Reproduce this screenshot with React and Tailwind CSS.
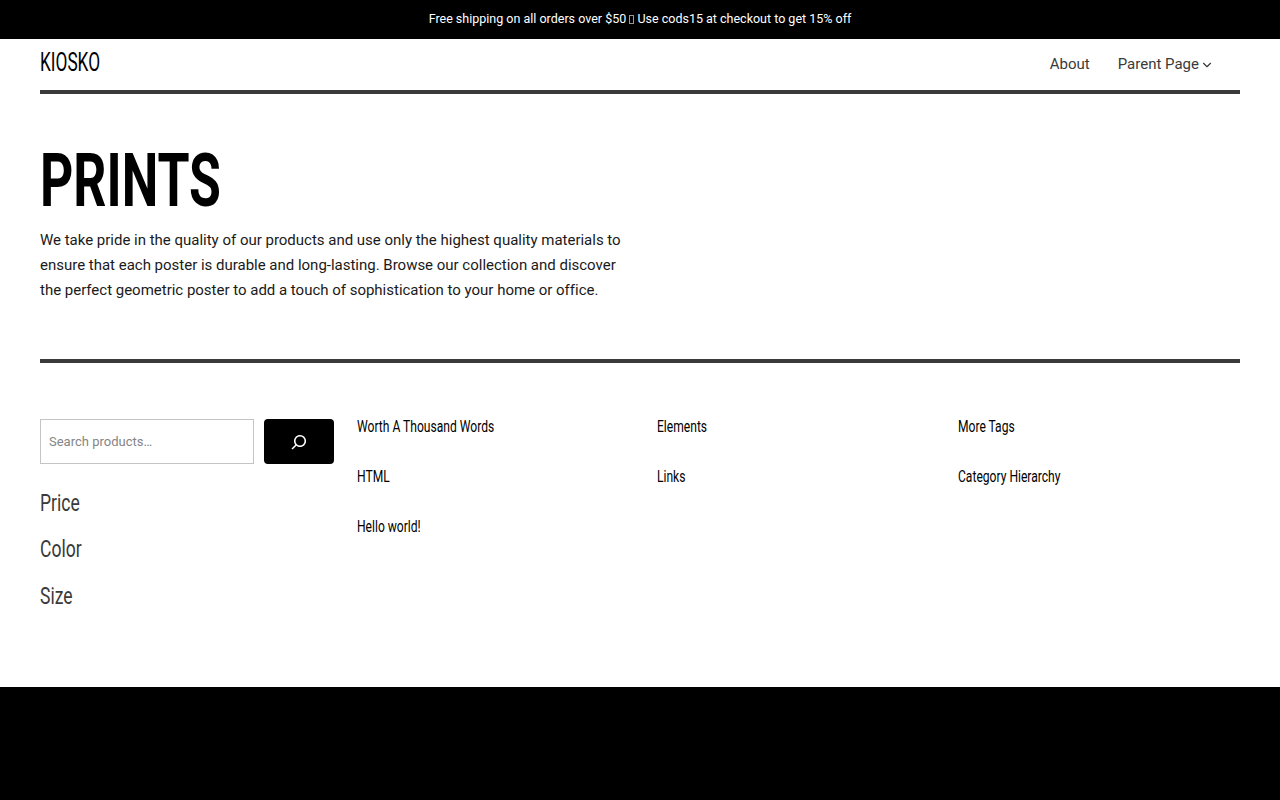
import React from 'react';
import { ChevronDown } from 'lucide-react';

const columns = [
  ['Worth A Thousand Words', 'HTML', 'Hello world!'],
  ['Elements', 'Links'],
  ['More Tags', 'Category Hierarchy'],
];

export default function App() {
  return (
    <div className="min-h-[800px] flex flex-col bg-white font-['Roboto',sans-serif] text-[#3a3a3a]">
      <div className="h-[39px] bg-black text-white text-[12.5px] flex items-center justify-center whitespace-pre">
        Free shipping on all orders over $50 <span className="inline-block w-[5px] h-[9px] border border-[#999]" /> Use cods15 at checkout to get 15% off
      </div>

      <header className="mx-10 h-[55px] border-b-4 border-[#3a3a3a] flex justify-between pr-[25px]">
        <a className="inline-block origin-left scale-x-[.69] text-[25px] leading-[48px] text-black">KIOSKO</a>
        <nav className="flex gap-7 text-[15px] leading-[50px]">
          <a>About</a>
          <a className="flex">
            <span>Parent Page</span>
            <ChevronDown className="w-[14px] h-[14px] ml-px mt-[19px] mr-px" strokeWidth={2} />
          </a>
        </nav>
      </header>

      <section className="mx-10 h-[269px] border-b-4 border-[#3a3a3a] pt-[46px]">
        <h1 className="origin-left scale-x-[.69] text-[75px] leading-[80px] font-bold text-black">PRINTS</h1>
        <p className="mt-[8px] w-[590px] text-[15px] leading-[25px] tracking-[-0.01px] text-[#1a1a1a]">
          We take pride in the quality of our products and use only the highest quality materials to
          ensure that each poster is durable and long-lasting. Browse our collection and discover
          the perfect geometric poster to add a touch of sophistication to your home or office.
        </p>
      </section>

      <section className="mx-10 h-[324px] flex pt-14">
        <aside className="w-[317px] shrink-0">
          <div className="flex gap-[10px] w-[294px]">
            <input
              placeholder="Search products…"
              className="w-[214px] h-[45px] border border-[#c4c4c4] px-2 text-[13px] placeholder:text-[#858585]"
            />
            <button className="w-[70px] h-[45px] bg-black rounded flex items-center justify-center">
              <svg viewBox="0 0 24 24" className="w-6 h-6 fill-white">
                <path d="M13 5c-3.3 0-6 2.7-6 6 0 1.4.5 2.7 1.3 3.7l-3.8 3.8 1.1 1.1 3.8-3.8c1 .8 2.3 1.3 3.7 1.3 3.3 0 6-2.7 6-6S16.3 5 13 5zm0 10.5c-2.5 0-4.5-2-4.5-4.5s2-4.5 4.5-4.5 4.5 2 4.5 4.5-2 4.5-4.5 4.5z" />
              </svg>
            </button>
          </div>
          <div className="origin-left scale-x-[.73] text-[24px] leading-[46.4px] mt-[16px]">
            <div>Price</div>
            <div>Color</div>
            <div>Size</div>
          </div>
        </aside>
        <div className="flex-1 grid grid-cols-3 gap-x-[18px] items-start">
          {columns.map((links) => (
            <ul key={links[0]} className="origin-left scale-x-[.755] text-[16px] leading-[50px] text-black -mt-[17px]">
              {links.map((label) => (
                <li key={label}>{label}</li>
              ))}
            </ul>
          ))}
        </div>
      </section>

      <footer className="h-[113px] bg-black" />
    </div>
  );
}
